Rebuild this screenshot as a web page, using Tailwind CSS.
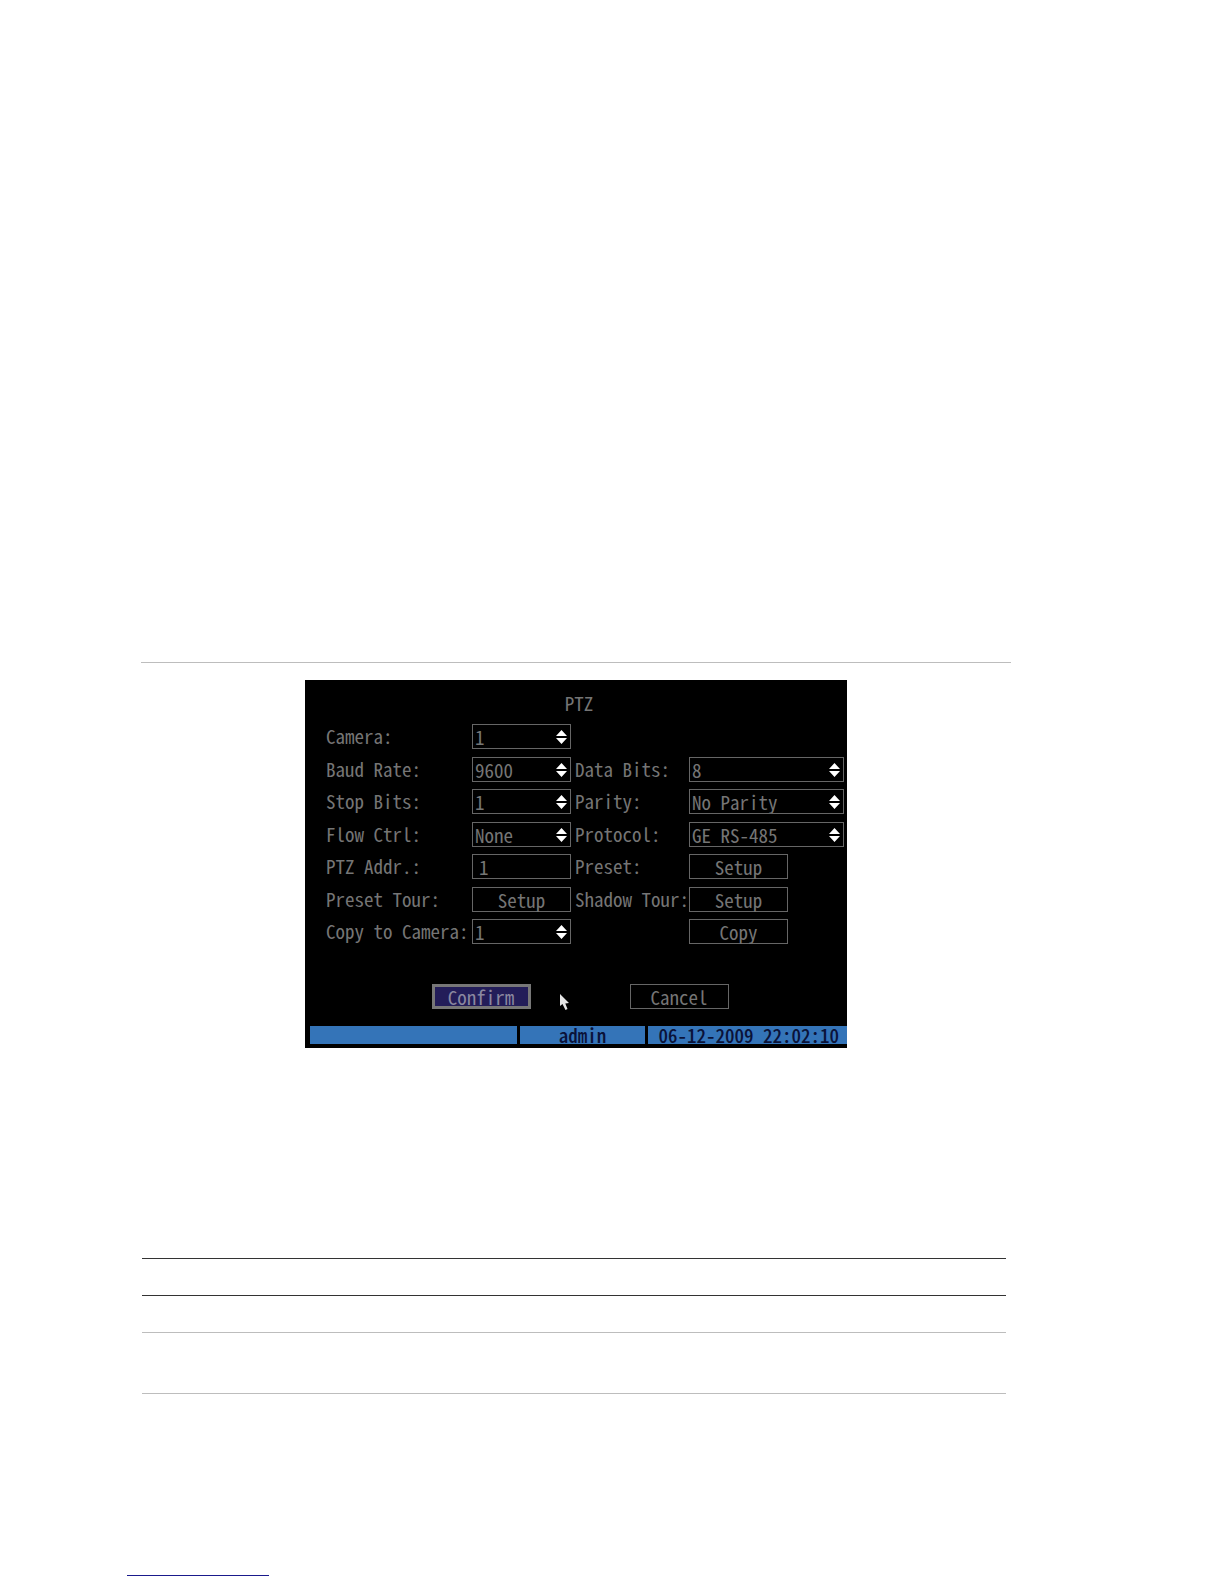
<!DOCTYPE html>
<html lang="en">

<head>
    <meta charset="UTF-8">
    <meta name="viewport" content="width=device-width, initial-scale=1.0">
    <title>PTZ</title>
    <script src="https://cdn.jsdelivr.net/npm/@tailwindcss/browser@4"></script>
</head>

<body class="bg-white">
    <div class="min-h-screen flex flex-col pt-[662px] pb-2">
        <main class="w-full max-w-[1011px] pl-[141px]">
            <hr class="border-[#bdbdbd]">

            <!-- PTZ menu -->
            <form action="#" id="ptz"
                class="relative mt-[17px] mx-auto w-full max-w-[542px] bg-black text-[#757575] font-['Noto_Sans_CJK_SC',monospace] [font-feature-settings:'hwid'] [font-variant-ligatures:none] text-[19px] leading-[23px] pb-1">
                <h1 class="pt-[11px] pl-1.5 h-11 text-center">PTZ</h1>

                <div class="grid grid-cols-[146px_99px_118px_1fr] auto-rows-[25px] content-between h-[220px] pl-[21px] pr-[3px] whitespace-nowrap">
                    <label for="camera">Camera:</label>
                    <div class="relative">
                        <select id="camera" class="appearance-none block w-full h-full border border-[#666] pl-0.5">
                            <option>1</option>
                        </select>
                        <svg class="absolute right-1 top-1.5 w-[11px] h-[14px] fill-white pointer-events-none" viewBox="0 0 11 14"><path d="M5.500 0 11 6H0zM0 8h11l-5.500 6z" /></svg>
                    </div>

                    <label for="baud" class="col-start-1">Baud Rate:</label>
                    <div class="relative">
                        <select id="baud" class="appearance-none block w-full h-full border border-[#666] pl-0.5">
                            <option>9600</option>
                        </select>
                        <svg class="absolute right-1 top-1.5 w-[11px] h-[14px] fill-white pointer-events-none" viewBox="0 0 11 14"><path d="M5.500 0 11 6H0zM0 8h11l-5.500 6z" /></svg>
                    </div>
                    <label for="databits" class="pl-1">Data Bits:</label>
                    <div class="relative">
                        <select id="databits" class="appearance-none block w-full h-full border border-[#666] pl-0.5">
                            <option>8</option>
                        </select>
                        <svg class="absolute right-1 top-1.5 w-[11px] h-[14px] fill-white pointer-events-none" viewBox="0 0 11 14"><path d="M5.500 0 11 6H0zM0 8h11l-5.500 6z" /></svg>
                    </div>

                    <label for="stopbits">Stop Bits:</label>
                    <div class="relative">
                        <select id="stopbits" class="appearance-none block w-full h-full border border-[#666] pl-0.5">
                            <option>1</option>
                        </select>
                        <svg class="absolute right-1 top-1.5 w-[11px] h-[14px] fill-white pointer-events-none" viewBox="0 0 11 14"><path d="M5.500 0 11 6H0zM0 8h11l-5.500 6z" /></svg>
                    </div>
                    <label for="parity" class="pl-1">Parity:</label>
                    <div class="relative">
                        <select id="parity" class="appearance-none block w-full h-full border border-[#666] pl-0.5">
                            <option>No Parity</option>
                        </select>
                        <svg class="absolute right-1 top-1.5 w-[11px] h-[14px] fill-white pointer-events-none" viewBox="0 0 11 14"><path d="M5.500 0 11 6H0zM0 8h11l-5.500 6z" /></svg>
                    </div>

                    <label for="flow">Flow Ctrl:</label>
                    <div class="relative">
                        <select id="flow" class="appearance-none block w-full h-full border border-[#666] pl-0.5">
                            <option>None</option>
                        </select>
                        <svg class="absolute right-1 top-1.5 w-[11px] h-[14px] fill-white pointer-events-none" viewBox="0 0 11 14"><path d="M5.500 0 11 6H0zM0 8h11l-5.500 6z" /></svg>
                    </div>
                    <label for="protocol" class="pl-1">Protocol:</label>
                    <div class="relative">
                        <select id="protocol" class="appearance-none block w-full h-full border border-[#666] pl-0.5">
                            <option>GE RS-485</option>
                        </select>
                        <svg class="absolute right-1 top-1.5 w-[11px] h-[14px] fill-white pointer-events-none" viewBox="0 0 11 14"><path d="M5.500 0 11 6H0zM0 8h11l-5.500 6z" /></svg>
                    </div>

                    <label for="address">PTZ Addr.:</label>
                    <input type="text" id="address" value="1" class="w-full min-w-0 border border-[#666] pl-1.5">
                    <label for="preset" class="pl-1">Preset:</label>
                    <button type="button" id="preset" class="w-[99px] border border-[#666]">Setup</button>

                    <label for="tour">Preset Tour:</label>
                    <button type="button" id="tour" class="border border-[#666]">Setup</button>
                    <label for="shadow" class="pl-1">Shadow Tour:</label>
                    <button type="button" id="shadow" class="w-[99px] border border-[#666]">Setup</button>

                    <label for="copyto">Copy to Camera:</label>
                    <div class="relative">
                        <select id="copyto" class="appearance-none block w-full h-full border border-[#666] pl-0.5">
                            <option>1</option>
                        </select>
                        <svg class="absolute right-1 top-1.5 w-[11px] h-[14px] fill-white pointer-events-none" viewBox="0 0 11 14"><path d="M5.500 0 11 6H0zM0 8h11l-5.500 6z" /></svg>
                    </div>
                    <button type="button" class="col-start-4 w-[99px] border border-[#666]">Copy</button>
                </div>

                <div class="mt-10 flex justify-center gap-[99px] pl-2">
                    <button type="submit" class="w-[99px] h-[25px] border-3 border-[#777] bg-[#231d59] text-[#8a88a0] leading-[19px]">Confirm</button>
                    <button type="reset" class="w-[99px] h-[25px] border border-[#666]">Cancel</button>
                </div>

                <!-- status bar -->
                <div class="mt-[17px] pl-[5px] grid grid-cols-[207px_125px_1fr] gap-[3px] h-[18px] text-[#0a1238] leading-[18px] font-medium text-center">
                    <div class="bg-[#3474b8]"></div>
                    <div class="bg-[#3474b8]">admin</div>
                    <div class="bg-[#3474b8] pr-2 text-right">06-12-2009 22:02:10</div>
                </div>

                <!-- mouse pointer -->
                <svg class="absolute left-[255px] top-[314px] w-[9px] h-[16px]" viewBox="0 0 9 16"><path d="M0 0v12l2.500-2 3 6 2-1L5.300 9.500 9 9z" fill="#e5e5e5" /></svg>
            </form>

            <!-- empty table rules -->
            <div class="mt-[210px] ml-px mr-[5px]">
                <div class="h-[37px] border-t border-[#333]"></div>
                <div class="h-[37px] border-t border-[#333]"></div>
                <div class="h-[61px] border-t border-[#bdbdbd]"></div>
                <div class="border-t border-[#bdbdbd]"></div>
            </div>
        </main>

        <footer class="mt-auto pl-[127px]">
            <div class="w-[142px] h-px bg-[#1a1a8c]"></div>
        </footer>
    </div>
</body>

</html>
